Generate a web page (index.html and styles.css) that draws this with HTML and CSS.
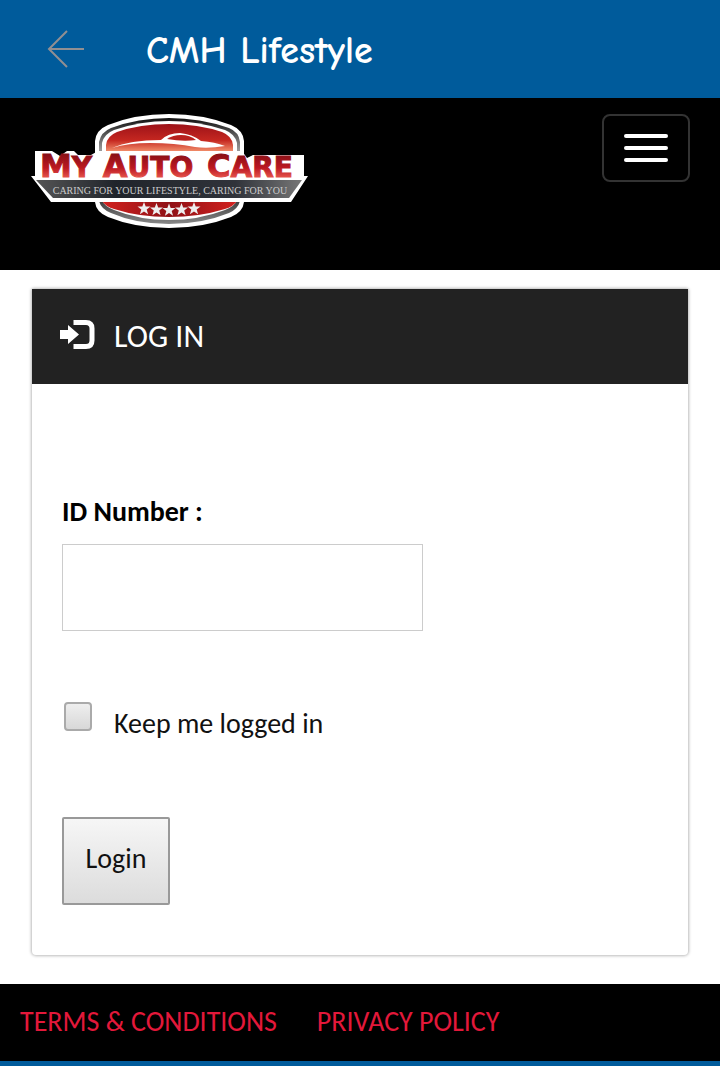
FILE: index.html
```html
<!DOCTYPE html>
<html lang="en">
<head>
<meta charset="utf-8">
<meta name="viewport" content="width=device-width, initial-scale=1">
<title>CMH Lifestyle</title>
<link rel="stylesheet" href="styles.css">
</head>
<body>
<header class="app-bar">
  <button class="back" type="button" aria-label="Back">
    <svg width="40" height="40" viewBox="0 0 40 40" fill="none" stroke="#918f92" stroke-width="2"><path d="M38 20H3M21 2L3 20l18 18"/></svg>
  </button>
  <h1 class="app-title">CMH Lifestyle</h1>
</header>
<nav class="navbar">
  <a class="brand" href="#" aria-label="MyAutoCare home">
    <svg class="logo" width="280" height="118" viewBox="30 112 280 118">
      <defs>
        <linearGradient id="redTop" x1="0" y1="0" x2="0" y2="1"><stop offset="0" stop-color="#9c1218"/><stop offset=".6" stop-color="#c52720"/><stop offset="1" stop-color="#f08a68"/></linearGradient>
        <linearGradient id="redLow" x1="0" y1="0" x2="1" y2="0"><stop offset="0" stop-color="#d3221f"/><stop offset=".5" stop-color="#8f1116"/><stop offset="1" stop-color="#d3221f"/></linearGradient>
        <linearGradient id="word" x1="0" y1="0" x2="0" y2="1"><stop offset=".2" stop-color="#8b1017"/><stop offset=".55" stop-color="#bc1821"/><stop offset=".8" stop-color="#e4524b"/></linearGradient>
        <linearGradient id="band" x1="0" y1="0" x2="1" y2="0"><stop offset="0" stop-color="#555"/><stop offset=".3" stop-color="#20242b"/><stop offset=".75" stop-color="#30333a"/><stop offset="1" stop-color="#777"/></linearGradient>
        <linearGradient id="ring" x1="0" y1="0" x2="0" y2="1"><stop offset="0" stop-color="#111"/><stop offset=".3" stop-color="#999"/><stop offset=".7" stop-color="#222"/><stop offset="1" stop-color="#888"/></linearGradient>
      </defs>
      <path fill="#fff" d="M95 160V141Q96 130 108 125Q135 114 169 114T231 125Q243 130 244 141V202Q243 212 231 217Q203 228 169 228T108 217Q96 212 95 202Z"/>
      <path fill="url(#ring)" d="M99 160V142Q101 132 111 128Q138 118 169 118T229 128Q239 132 240 142V201Q238 209 229 213Q202 224 169 224T111 213Q101 209 99 201Z"/>
      <path fill="#fff" d="M102 160V143Q104 134 114 130Q140 121 169 121T225 130Q235 134 237 143V200Q235 206 225 210Q199 220 169 220T114 210Q104 206 102 200Z"/>
      <path fill="url(#redTop)" d="M106 151V145Q107 136 117 132Q140 124 169 124T222 132Q232 136 233 145V151Z"/>
      <path fill="url(#redLow)" d="M102 201H237Q234 206 225 209Q199 217 169 217T114 209Q105 206 102 201Z"/>
      <path fill="#fff" d="M112 148Q130 140 161 140Q168 133 180 133Q192 134 201 141Q215 142 225 146Q208 149 195 147Q175 143 150 143Q128 143 112 148Z"/>
      <path fill="#b8211e" d="M167 139Q173 135 181 135Q190 135 196 140Q183 142 167 139Z"/>
      <path fill="#fff" d="M35 151H52L60 156L67 151H74L78 155H91L98 151H242L247 158L253 155H304V176H308L291 202H51L31 176H35Z"/>
      <path fill="url(#band)" d="M36 180H302L289 198H53Z"/>
      <g class="wordmark" fill="url(#word)" stroke="url(#word)" text-anchor="middle">
        <text x="66" y="177">M<tspan class="small">Y</tspan></text>
        <text x="148" y="177">A<tspan class="small">UTO</tspan></text>
        <text x="250" y="177">C<tspan class="small">ARE</tspan></text>
      </g>
      <text class="tagline" x="170" y="194" text-anchor="middle">CARING FOR YOUR LIFESTYLE, CARING FOR YOU</text>
      <g fill="#eee">
        <path id="star" d="M144 202l1.700 4.600h4.800l-3.800 3 1.400 4.700-4.100-2.800-4.100 2.800 1.400-4.700-3.800-3h4.800z"/>
        <use href="#star" x="12.500" y="1"/><use href="#star" x="25" y="1.500"/><use href="#star" x="37.500" y="1"/><use href="#star" x="50"/>
      </g>
    </svg>
  </a>
  <button class="menu" type="button" aria-label="Menu"><span class="bar"></span><span class="bar"></span><span class="bar"></span></button>
</nav>
<main class="content">
  <section class="card">
    <div class="card-head">
      <svg class="login-icon" width="36" height="32" viewBox="0 0 36 32"><path fill="#fff" d="M0 11h8V6l11 9.500L8 25v-5H0z"/><path fill="none" stroke="#fff" stroke-width="5" stroke-linecap="square" d="M16 3.500h10q6 0 6 6v12q0 6-6 6H16"/></svg>
      <h2 class="card-title">LOG IN</h2>
    </div>
    <form class="form">
      <label class="field-label" for="id-number">ID Number :</label>
      <input class="field" id="id-number" type="text">
      <div class="remember">
        <input class="check" id="keep" type="checkbox">
        <label for="keep">Keep me logged in</label>
      </div>
      <button class="submit" type="submit">Login</button>
    </form>
  </section>
</main>
<footer class="footer">
  <a href="#">TERMS &amp; CONDITIONS</a>
  <a href="#">PRIVACY POLICY</a>
</footer>
</body>
</html>
```
FILE: styles.css
```css
* { box-sizing: border-box; }
body {
  margin: 0;
  background: #fff;
  color: #111;
  font: 28px/32px Carlito, Lato, sans-serif;
}
button, input { font: inherit; color: inherit; }
.app-bar {
  display: flex;
  align-items: center;
  gap: 60px;
  height: 98px;
  padding: 0 46px;
  background: #005b9b;
}
.back { display: flex; padding: 0; border: 0; background: none; }
.app-title {
  margin: 0;
  padding-top: 4px;
  color: #fff;
  font: 700 38px/40px "Comic Neue", Lato, sans-serif;
}
.navbar {
  display: flex;
  justify-content: space-between;
  align-items: flex-start;
  min-height: 172px;
  padding: 14px 30px;
  background: #000;
}
.brand, .logo { display: block; }
.wordmark { font: bold 32px "DejaVu Sans", sans-serif; stroke-width: 1px; }
.small { font-size: 28px; }
.tagline { font: 10px "Liberation Serif", serif; fill: #ccc; }
.menu {
  display: flex;
  flex-direction: column;
  justify-content: center;
  gap: 8px;
  width: 88px;
  height: 68px;
  margin-top: 2px;
  padding: 0 20px;
  border: 2px solid #333;
  border-radius: 8px;
  background: #000;
}
.bar { height: 4px; border-radius: 2px; background: #fff; }
.content { padding: 19px 32px 29px; }
.card {
  border-radius: 2px 2px 4px 4px;
  background: #fff;
  box-shadow: 0 0 3px 1px #bbb;
}
.card-head {
  display: flex;
  align-items: center;
  gap: 18px;
  height: 95px;
  padding: 0 28px;
  background: #222;
}
.login-icon { margin-bottom: 4px; }
.card-title { margin: 0; color: #fff; font-size: 32px; font-weight: 400; }
.form {
  display: flex;
  flex-direction: column;
  align-items: flex-start;
  padding: 112px 30px 50px;
}
.field-label { margin-bottom: 16px; color: #000; font-weight: 700; }
.field {
  width: 361px;
  max-width: 100%;
  height: 87px;
  padding: 0 16px;
  border: 1px solid #ccc;
  background: #fff;
}
.remember {
  display: flex;
  align-items: flex-start;
  gap: 22px;
  margin: 71px 2px 77px;
}
.remember label { padding-top: 6px; }
.check {
  appearance: none;
  width: 28px;
  height: 29px;
  margin: 0;
  border: 2px solid #aaa;
  border-radius: 4px;
  background: linear-gradient(#eee, #d8d8d8);
}
.submit {
  width: 108px;
  height: 88px;
  padding: 0 0 4px;
  border: 2px solid #999;
  border-radius: 2px;
  background: linear-gradient(#f6f6f6, #dcdcdc);
}
.footer {
  display: flex;
  gap: 40px;
  align-items: center;
  height: 82px;
  padding: 0 20px 2px;
  border-bottom: 5px solid #005b9b;
  background: #000;
}
.footer a { color: #e3183a; text-decoration: none; }
```
